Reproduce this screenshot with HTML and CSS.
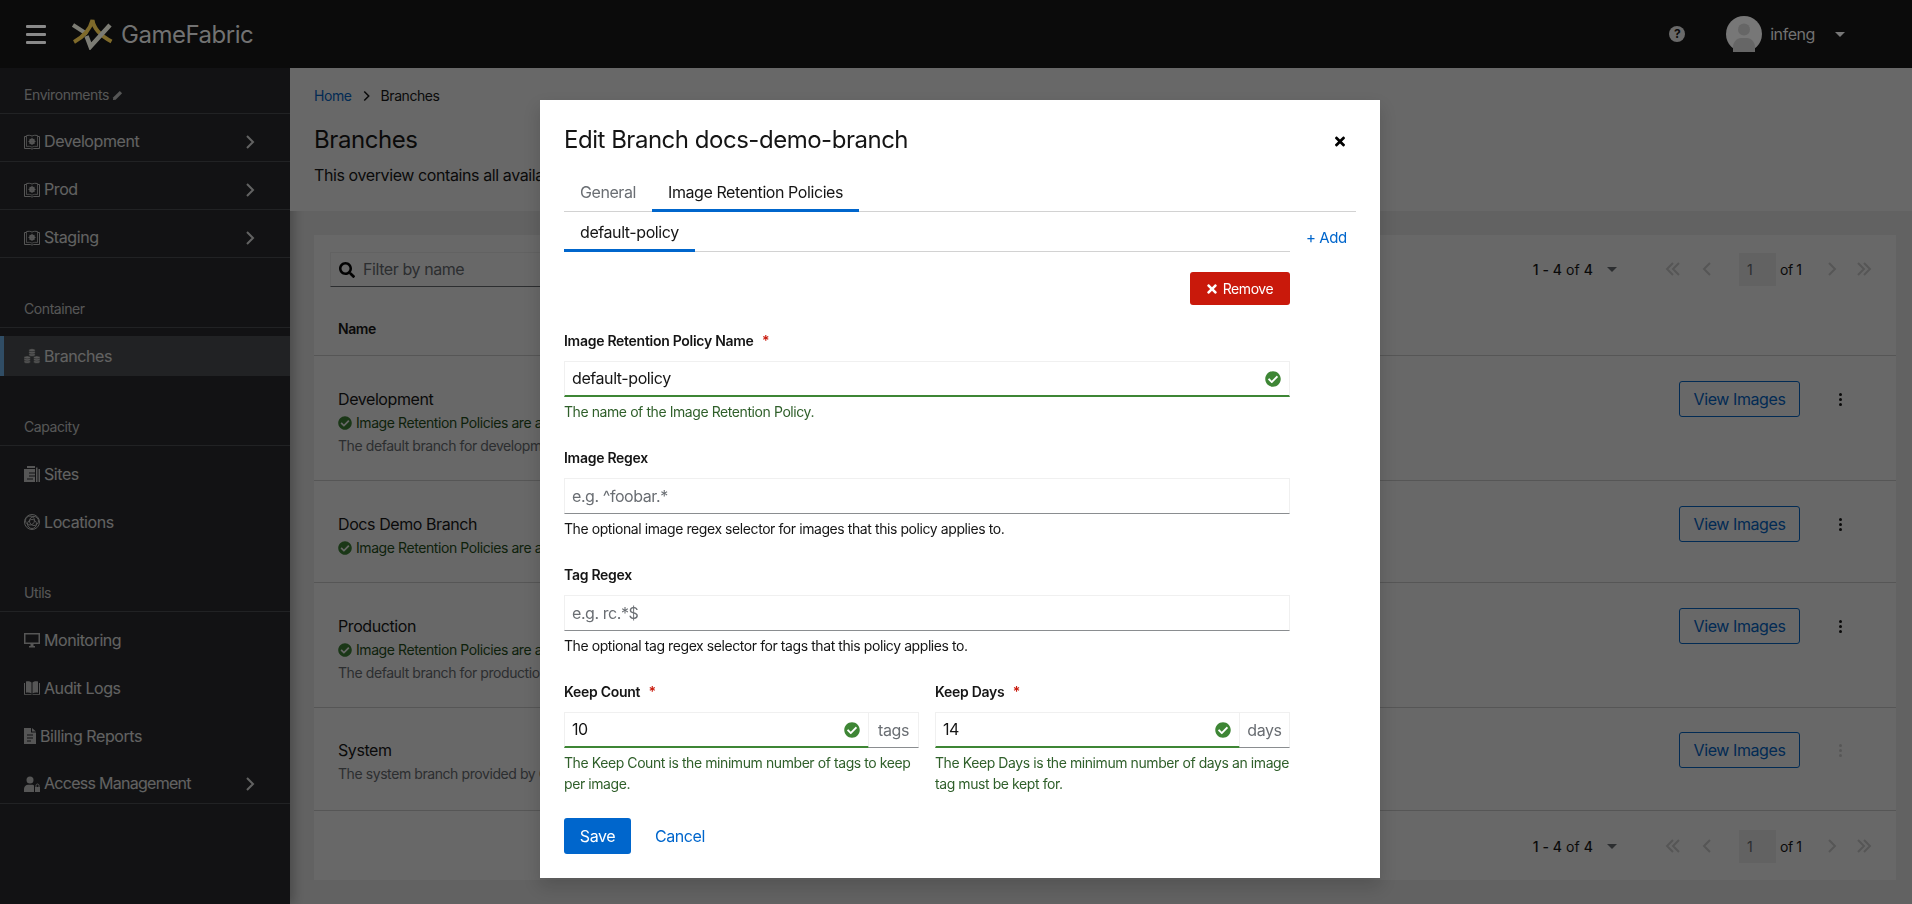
FILE: index.html
```html
<!DOCTYPE html>
<html lang="en">
<head>
    <meta charset="UTF-8">
    <title>GameFabric - Branches</title>
    <link rel="stylesheet" href="styles.css">
</head>
<body>
    <svg class="sprites" width="0" height="0">
        <symbol id="check" viewBox="0 0 512 512"><path d="M504 256c0 136.967-111.033 248-248 248S8 392.967 8 256 119.033 8 256 8s248 111.033 248 248zM227.314 387.314l184-184c6.248-6.248 6.248-16.379 0-22.627l-22.627-22.627c-6.248-6.249-16.379-6.249-22.628 0L216 308.118l-70.059-70.059c-6.248-6.248-16.379-6.248-22.628 0l-22.627 22.627c-6.248 6.248-6.248 16.379 0 22.627l104 104c6.249 6.249 16.379 6.249 22.628.001z"/></symbol>
        <symbol id="times" viewBox="0 0 352 512"><path d="M242.72 256l100.07-100.07c12.28-12.28 12.28-32.19 0-44.48l-22.24-22.24c-12.28-12.28-32.19-12.28-44.48 0L176 189.28 75.93 89.21c-12.28-12.28-32.19-12.28-44.48 0L9.21 111.45c-12.28 12.28-12.28 32.19 0 44.48L109.28 256 9.21 356.07c-12.28 12.28-12.28 32.19 0 44.48l22.24 22.24c12.28 12.28 32.2 12.28 44.48 0L176 322.72l100.07 100.07c12.28 12.28 32.2 12.28 44.48 0l22.24-22.24c12.28-12.28 12.28-32.19 0-44.48L242.72 256z"/></symbol>
        <symbol id="search" viewBox="0 0 512 512"><path d="M505 442.7L405.3 343c-4.5-4.5-10.6-7-17-7H372c27.6-35.3 44-79.7 44-128C416 93.1 322.9 0 208 0S0 93.1 0 208s93.1 208 208 208c48.3 0 92.7-16.4 128-44v16.3c0 6.4 2.5 12.5 7 17l99.7 99.7c9.4 9.4 24.6 9.4 33.9 0l28.3-28.3c9.4-9.4 9.4-24.6.1-34zM208 336c-70.7 0-128-57.2-128-128 0-70.7 57.2-128 128-128 70.7 0 128 57.2 128 128 0 70.7-57.2 128-128 128z"/></symbol>
        <symbol id="chev" viewBox="0 0 10 16"><path d="M2 2l6 6-6 6" fill="none" stroke="currentColor" stroke-width="2"/></symbol>
        <symbol id="chev-l" viewBox="0 0 10 16"><path d="M8 2L2 8l6 6" fill="none" stroke="currentColor" stroke-width="2"/></symbol>
        <symbol id="dbl-l" viewBox="0 0 16 16"><path d="M8 2L2 8l6 6M14 2L8 8l6 6" fill="none" stroke="currentColor" stroke-width="2"/></symbol>
        <symbol id="dbl-r" viewBox="0 0 16 16"><path d="M2 2l6 6-6 6M8 2l6 6-6 6" fill="none" stroke="currentColor" stroke-width="2"/></symbol>
        <symbol id="env" viewBox="0 0 16 16"><path d="M.5 2.500h2V1.600c2-.6 4.200-.3 5.500.5 1.300-.8 3.500-1.100 5.500-.5v.9h2V14.500H9.500c-.4.600-2.600.600-3 0H.5z" fill="none" stroke="currentColor" stroke-width="1"/><path d="M2.500 2.500V12.500c2-.4 4-.2 5.500.7 1.500-.9 3.500-1.100 5.500-.7V2.500" fill="none" stroke="currentColor" stroke-width=".8"/><circle cx="8" cy="7.400" r="2.800" fill="currentColor"/><circle cx="8" cy="7.400" r="1" fill="#282a2e"/><path d="M8 3.800v7.200M4.400 7.400h7.200M5.500 4.900l5 5M10.500 4.900l-5 5" stroke="currentColor" stroke-width=".9"/></symbol>
    </svg>

    <header class="topbar">
        <div class="burger"><span></span><span></span><span></span></div>
        <svg class="logo" viewBox="0 0 42 32" width="42" height="32">
            <path d="M2 7l14 9" fill="none" stroke="#7c7c74" stroke-width="4"/>
            <path d="M3 24C12 19 19 12 21.500 2 23 12 32 19 40.500 23.500" fill="none" stroke="#7f6a2a" stroke-width="4"/>
            <path d="M15.500 18L19.500 28.500 39 7" fill="none" stroke="#7c7c74" stroke-width="4.500"/>
        </svg>
        <span class="brand">GameFabric</span>
        <span class="help">?</span>
        <svg class="avatar" viewBox="0 0 36 36" width="36" height="36">
            <circle cx="18" cy="18" r="18" fill="#777"/>
            <circle cx="18" cy="13.500" r="6" fill="#666"/>
            <path d="M7 36v-5c0-5 4-9 8-9h6c4 0 8 4 8 9v5z" fill="#666"/>
        </svg>
        <span class="username">infeng</span>
        <span class="caret caret-light"></span>
    </header>

    <div class="layout">
        <nav class="sidebar">
            <div class="nav-label">Environments
                <svg width="11" height="11" viewBox="0 0 12 12"><path d="M8.500 1l2.500 2.500-7 7L1 11l.5-3z" fill="currentColor"/></svg>
            </div>
            <a class="nav-item bordered"><svg class="nav-icon"><use href="#env"/></svg>Development<svg class="nav-chev"><use href="#chev"/></svg></a>
            <a class="nav-item bordered"><svg class="nav-icon"><use href="#env"/></svg>Prod<svg class="nav-chev"><use href="#chev"/></svg></a>
            <a class="nav-item bordered"><svg class="nav-icon"><use href="#env"/></svg>Staging<svg class="nav-chev"><use href="#chev"/></svg></a>

            <div class="nav-label spaced">Container</div>
            <a class="nav-item active">
                <svg class="nav-icon" viewBox="0 0 16 16"><g fill="currentColor" stroke="#4f5255" stroke-width=".5"><ellipse cx="8" cy="6.800" rx="3.200" ry="1.500"/><ellipse cx="8" cy="4.500" rx="3.200" ry="1.500"/><ellipse cx="8" cy="2.200" rx="3.200" ry="1.500"/><ellipse cx="3.200" cy="13.800" rx="3.200" ry="1.500"/><ellipse cx="3.200" cy="11.600" rx="3.200" ry="1.500"/><ellipse cx="3.200" cy="9.400" rx="3.200" ry="1.500"/><ellipse cx="12.800" cy="13.800" rx="3.200" ry="1.500"/><ellipse cx="12.800" cy="11.600" rx="3.200" ry="1.500"/><ellipse cx="12.800" cy="9.400" rx="3.200" ry="1.500"/></g></svg>
                Branches
            </a>

            <div class="nav-label spaced">Capacity</div>
            <a class="nav-item">
                <svg class="nav-icon" viewBox="0 0 16 16"><path fill="currentColor" d="M0 3h11v13H0zM3 0h8v2H3zM12 1.500h1.500V16H12zM14.500 3H16v13h-1.500z"/><path stroke="#282a2e" stroke-width="1.200" d="M5 7h6M5 10h6M3 13h6"/></svg>
                Sites
            </a>
            <a class="nav-item">
                <svg class="nav-icon" viewBox="0 0 16 16"><g fill="none" stroke="currentColor" stroke-width="1"><circle cx="8" cy="8" r="7.500"/><circle cx="6" cy="6.500" r="4.500"/><circle cx="10" cy="7" r="4.500"/><circle cx="8" cy="10" r="4.500"/></g></svg>
                Locations
            </a>

            <div class="nav-label spaced">Utils</div>
            <a class="nav-item">
                <svg class="nav-icon" viewBox="0 0 16 16"><path fill="currentColor" d="M0 1h16v11H0zM5 14h6v1.500H5zM6.500 12h3v2h-3z"/><path fill="#282a2e" d="M1.500 2.500h13v8h-13z"/></svg>
                Monitoring
            </a>
            <a class="nav-item">
                <svg class="nav-icon" viewBox="0 0 16 16"><path fill="currentColor" d="M2 1.500c2.300-.4 4.300 0 5.500 1v11c-1.400-.8-3.200-1.100-5.500-.8zM14 1.500c-2.300-.4-4.300 0-5.500 1v11c1.400-.8 3.200-1.100 5.500-.8zM0 3h1v11h6.500v.8H0zM16 3h-1v11H8.500v.8H16z"/></svg>
                Audit Logs
            </a>
            <a class="nav-item">
                <svg class="nav-icon narrow" viewBox="0 0 12 16"><path fill="currentColor" d="M0 0h7v4.500h5V16H0zM8 0l4 3.500H8z"/><path stroke="#282a2e" stroke-width="1.200" d="M3 7h6M3 10h6M3 13h4"/></svg>
                Billing Reports
            </a>
            <a class="nav-item bordered">
                <svg class="nav-icon" viewBox="0 0 16 16"><g fill="currentColor"><circle cx="6" cy="4" r="3.500"/><path d="M0 16v-3c0-2.500 2-4.200 4-4.200h4c1 0 1.500.3 2 .6V16z"/><path d="M11 11h5v5h-5z"/></g><path d="M12 11V9.500c0-2 3-2 3 0V11" fill="none" stroke="currentColor"/></svg>
                <span class="nav-long">Access Management</span><svg class="nav-chev"><use href="#chev"/></svg>
            </a>
        </nav>

        <main class="content">
            <section class="page-head">
                <div class="breadcrumb">
                    <a class="link">Home</a>
                    <svg class="crumb-sep"><use href="#chev"/></svg>
                    <span>Branches</span>
                </div>
                <h1 class="page-title">Branches</h1>
                <p class="page-desc">This overview contains all available branches and their image retention policies.</p>
            </section>

            <section class="card">
                <div class="toolbar">
                    <div class="filter">
                        <svg class="search-icon"><use href="#search"/></svg>
                        <span class="placeholder">Filter by name</span>
                    </div>
                    <div class="pager">
                        <span class="pager-count"><b>1 - 4</b> of <b>4</b></span>
                        <span class="caret"></span>
                        <svg class="pager-icon first"><use href="#dbl-l"/></svg>
                        <svg class="pager-icon"><use href="#chev-l"/></svg>
                        <span class="pager-input">1</span>
                        <span class="pager-of">of 1</span>
                        <svg class="pager-icon"><use href="#chev"/></svg>
                        <svg class="pager-icon"><use href="#dbl-r"/></svg>
                    </div>
                </div>
                <div class="table-head">Name</div>

                <div class="row">
                    <div class="row-text">
                        <div class="row-name">Development</div>
                        <div class="row-status"><svg class="status-icon"><use href="#check"/></svg>Image Retention Policies are active</div>
                        <div class="row-desc">The default branch for development.</div>
                    </div>
                    <a class="btn-outline">View Images</a>
                    <span class="kebab"><i></i><i></i><i></i></span>
                </div>
                <div class="row">
                    <div class="row-text">
                        <div class="row-name">Docs Demo Branch</div>
                        <div class="row-status"><svg class="status-icon"><use href="#check"/></svg>Image Retention Policies are active</div>
                    </div>
                    <a class="btn-outline">View Images</a>
                    <span class="kebab"><i></i><i></i><i></i></span>
                </div>
                <div class="row">
                    <div class="row-text">
                        <div class="row-name">Production</div>
                        <div class="row-status"><svg class="status-icon"><use href="#check"/></svg>Image Retention Policies are active</div>
                        <div class="row-desc">The default branch for production.</div>
                    </div>
                    <a class="btn-outline">View Images</a>
                    <span class="kebab"><i></i><i></i><i></i></span>
                </div>
                <div class="row row-last">
                    <div class="row-text">
                        <div class="row-name">System</div>
                        <div class="row-desc">The system branch provided by GameFabric.</div>
                    </div>
                    <a class="btn-outline">View Images</a>
                    <span class="kebab disabled"><i></i><i></i><i></i></span>
                </div>

                <div class="pager pager-bottom">
                    <span class="pager-count"><b>1 - 4</b> of <b>4</b></span>
                    <span class="caret"></span>
                    <svg class="pager-icon first"><use href="#dbl-l"/></svg>
                    <svg class="pager-icon"><use href="#chev-l"/></svg>
                    <span class="pager-input">1</span>
                    <span class="pager-of">of 1</span>
                    <svg class="pager-icon"><use href="#chev"/></svg>
                    <svg class="pager-icon"><use href="#dbl-r"/></svg>
                </div>
            </section>
        </main>
    </div>

    <div class="backdrop"></div>

    <div class="modal">
        <div class="modal-head">
            <h2 class="modal-title">Edit Branch docs-demo-branch</h2>
            <svg class="modal-close"><use href="#times"/></svg>
        </div>
        <div class="tabs">
            <span class="tab">General</span>
            <span class="tab tab-active">Image Retention Policies</span>
        </div>
        <div class="subtabs-row">
            <div class="tabs subtabs">
                <span class="tab tab-active">default-policy</span>
            </div>
            <a class="add-link">+ Add</a>
        </div>

        <div class="form">
            <div class="remove-row">
                <a class="btn-danger"><svg class="btn-icon"><use href="#times"/></svg>Remove</a>
            </div>

            <div class="field">
                <div class="field-label">Image Retention Policy Name <em>*</em></div>
                <div class="input valid">default-policy<svg class="valid-icon"><use href="#check"/></svg></div>
                <div class="field-help ok">The name of the Image Retention Policy.</div>
            </div>
            <div class="field">
                <div class="field-label">Image Regex</div>
                <div class="input"><span class="placeholder">e.g. ^foobar.*</span></div>
                <div class="field-help">The optional image regex selector for images that this policy applies to.</div>
            </div>
            <div class="field">
                <div class="field-label">Tag Regex</div>
                <div class="input"><span class="placeholder">e.g. rc.*$</span></div>
                <div class="field-help">The optional tag regex selector for tags that this policy applies to.</div>
            </div>
            <div class="field-pair">
                <div class="field">
                    <div class="field-label">Keep Count <em>*</em></div>
                    <div class="input-group">
                        <div class="input valid">10<svg class="valid-icon"><use href="#check"/></svg></div>
                        <span class="addon">tags</span>
                    </div>
                    <div class="field-help ok">The Keep Count is the minimum number of tags to keep per image.</div>
                </div>
                <div class="field">
                    <div class="field-label">Keep Days <em>*</em></div>
                    <div class="input-group">
                        <div class="input valid">14<svg class="valid-icon"><use href="#check"/></svg></div>
                        <span class="addon">days</span>
                    </div>
                    <div class="field-help ok">The Keep Days is the minimum number of days an image tag must be kept for.</div>
                </div>
            </div>
            <div class="actions">
                <a class="btn-primary">Save</a>
                <a class="link">Cancel</a>
            </div>
        </div>
    </div>
</body>
</html>
```

FILE: styles.css
```css
* {
    box-sizing: border-box;
}
html, body {
    margin: 0;
    height: 904px;
    overflow: hidden;
}
body {
    font-family: Inter, "Noto Sans", sans-serif;
    font-size: 14px;
    line-height: 21px;
    letter-spacing: -0.03em;
    color: #151515;
    background: #f0f0f0;
}
.sprites {
    position: absolute;
}
.link {
    color: #06c;
}

/* top bar sits above the backdrop, so its colours are the dimmed ones */
.topbar {
    position: relative;
    z-index: 2;
    height: 68px;
    background: #0b0b0b;
    color: #727272;
    display: flex;
    align-items: center;
    padding-left: 26px;
}
.burger {
    width: 20px;
    display: flex;
    flex-direction: column;
    gap: 5px;
}
.burger span {
    height: 3px;
    background: #8a8a8a;
    border-radius: 1px;
}
.logo {
    margin-left: 25px;
}
.brand {
    margin-left: 8px;
    font-size: 24px;
    letter-spacing: -0.02em;
}
.help {
    margin-left: auto;
    margin-right: 1px;
    width: 16px;
    height: 16px;
    border-radius: 50%;
    background: #6a6a6a;
    color: #0b0b0b;
    font-size: 12px;
    font-weight: 700;
    line-height: 16px;
    text-align: center;
}
.avatar {
    margin-left: 40px;
}
.username {
    margin-left: 8px;
    font-size: 16px;
}
.caret {
    display: inline-block;
    width: 0;
    height: 0;
    border-left: 5px solid transparent;
    border-right: 5px solid transparent;
    border-top: 5px solid #6a6e73;
}
.caret-light {
    border-top-color: #777;
    margin: 0 67px 0 20px;
}

/* sidebar */
.layout {
    display: flex;
    height: 836px;
}
.sidebar {
    width: 290px;
    flex: none;
    background: #282a2e;
    color: #f0f0f0;
    box-shadow: 4px 0 10px rgba(0, 0, 0, 0.25);
}
.nav-label {
    padding: 16px 24px 8px;
    border-bottom: 1px solid #4f5255;
    color: #d2d2d2;
    height: 46px;
}
.nav-label svg {
    vertical-align: -1px;
}
.nav-label.spaced {
    margin-top: 24px;
}
.nav-item {
    display: flex;
    align-items: center;
    gap: 4px;
    height: 40px;
    margin-top: 8px;
    padding: 0 35px 0 24px;
    font-size: 16px;
}
.nav-item.bordered {
    border-bottom: 1px solid #4f5255;
}
.nav-item.active {
    background: #4f5255;
    border-left: 4px solid #73bcf7;
    padding-left: 20px;
}
.nav-icon {
    width: 16px;
    height: 16px;
    color: #d2d2d2;
    flex: none;
}
.nav-icon.narrow {
    width: 12px;
}
.nav-long {
    letter-spacing: -0.045em;
}
.nav-chev {
    width: 10px;
    height: 16px;
    margin-left: auto;
}

/* page */
.content {
    flex: 1;
    min-width: 0;
}
.page-head {
    height: 143px;
    background: #fff;
    padding: 17px 24px 24px;
}
.breadcrumb {
    display: flex;
    align-items: center;
    gap: 10px;
    margin-bottom: 18px;
}
.crumb-sep {
    width: 9px;
    height: 12px;
}
.page-title {
    margin: 0;
    font-size: 24px;
    line-height: 32px;
    font-weight: 400;
}
.page-desc {
    margin: 7px 0 0;
    font-size: 16px;
    line-height: 24px;
    letter-spacing: -0.025em;
}
.card {
    background: #fff;
    margin: 24px 16px 0 24px;
    height: 645px;
}
.toolbar {
    height: 67px;
    padding: 17px 0 0 16px;
    display: flex;
    justify-content: space-between;
}
.filter {
    width: 400px;
    height: 35px;
    display: flex;
    align-items: center;
    gap: 8px;
    padding-left: 8px;
    border: 1px solid #f0f0f0;
    border-bottom-color: #6a6e73;
}
.search-icon {
    width: 16px;
    height: 16px;
}
.placeholder {
    color: #6a6e73;
    font-size: 16px;
}
.pager {
    display: flex;
    align-items: center;
    height: 34px;
    padding-right: 24px;
}
.pager-bottom {
    justify-content: flex-end;
    margin-top: 18px;
}
.pager-count b {
    font-weight: 500;
}
.pager-count {
    margin-right: 14px;
    letter-spacing: 0.005em;
}
.pager-count + .caret {
    margin-right: 48px;
}
.pager-icon {
    width: 16px;
    height: 16px;
    color: #d2d2d2;
    margin-right: 16px;
}
.pager-icon.first {
    margin-right: 18px;
}
.pager-icon:last-child {
    margin-right: 0;
}
.pager-input {
    width: 37px;
    height: 33px;
    line-height: 33px;
    background: #f0f0f0;
    color: #6a6e73;
    padding-left: 8px;
    margin-left: 8px;
}
.pager-of {
    width: 48px;
    padding-left: 4px;
}
.table-head {
    height: 54px;
    padding: 16px 24px 0;
    font-weight: 600;
    border-bottom: 1px solid #d2d2d2;
}
.row {
    display: flex;
    align-items: flex-start;
    padding: 25px 16px 23px 24px;
    border-bottom: 1px solid #d2d2d2;
}
.row-last {
    margin-top: -1px;
    padding-bottom: 25px;
}
.row-text {
    flex: 1;
    min-width: 0;
    padding-top: 6px;
}
.row-name {
    font-size: 16px;
    line-height: 24px;
}
.row-status {
    line-height: 23px;
    color: #1e4f18;
    display: flex;
    align-items: center;
    gap: 4px;
}
.status-icon {
    width: 14px;
    height: 14px;
    fill: #3e8635;
}
.row-desc {
    line-height: 23px;
    color: #6a6e73;
}
.btn-outline {
    width: 121px;
    height: 36px;
    line-height: 34px;
    text-align: center;
    border: 1px solid #06c;
    border-radius: 3px;
    color: #06c;
    font-size: 16px;
}
.kebab {
    width: 80px;
    height: 36px;
    display: flex;
    flex-direction: column;
    align-items: center;
    justify-content: center;
    gap: 2px;
}
.kebab i {
    width: 3px;
    height: 3px;
    border-radius: 50%;
    background: #151515;
}
.kebab.disabled i {
    background: #d2d2d2;
}

/* modal */
.backdrop {
    position: fixed;
    inset: 0;
    z-index: 1;
    background: rgba(3, 3, 3, 0.6);
}
.modal {
    position: fixed;
    z-index: 2;
    left: 540px;
    top: 100px;
    width: 840px;
    height: 778px;
    background: #fff;
    padding: 24px;
    box-shadow: 0 8px 16px rgba(3, 3, 3, 0.16);
}
.modal-head {
    display: flex;
    justify-content: space-between;
    align-items: center;
    height: 32px;
    margin-bottom: 20px;
}
.modal-title {
    margin: 0;
    font-size: 24px;
    line-height: 32px;
    font-weight: 400;
    letter-spacing: -0.02em;
}
.modal-close {
    width: 10px;
    height: 15px;
    margin: 2px 11px 0 0;
}
.tabs {
    display: flex;
    height: 36px;
    border-bottom: 1px solid #d2d2d2;
    font-size: 16px;
}
.tab {
    padding: 4px 16px 0;
    height: 36px;
    line-height: 24px;
    color: #6a6e73;
}
.tab-active {
    color: #151515;
    border-bottom: 3px solid #06c;
}
.subtabs-row {
    display: flex;
    align-items: flex-end;
}
.subtabs {
    flex: none;
    width: 726px;
    margin-top: 8px;
    height: 32px;
    font-size: 16px;
}
.subtabs .tab {
    height: 32px;
    padding-top: 0;
}
.add-link {
    margin-left: 16px;
    font-size: 15px;
    color: #06c;
    padding-bottom: 4px;
}
.form {
    width: 726px;
}
.remove-row {
    display: flex;
    justify-content: flex-end;
    margin-top: 20px;
}
.btn-danger {
    width: 100px;
    height: 33px;
    display: flex;
    align-items: center;
    justify-content: center;
    gap: 6px;
    background: #c9190b;
    color: #fff;
    border-radius: 3px;
}
.btn-icon {
    width: 10px;
    height: 14px;
    fill: #fff;
}
.field {
    margin-top: 24px;
}
.field-label {
    line-height: 24px;
    margin-bottom: 8px;
    font-weight: 600;
    letter-spacing: -0.02em;
}
.field-label em {
    color: #c9190b;
    font-style: normal;
    margin-left: 5px;
}
.input {
    height: 36px;
    display: flex;
    align-items: center;
    justify-content: space-between;
    padding: 0 8px 0 7px;
    border: 1px solid #f0f0f0;
    border-bottom-color: #8a8d90;
    font-size: 16px;
}
.input.valid {
    border-bottom: 2px solid #3e8635;
}
.valid-icon {
    width: 16px;
    height: 16px;
    fill: #3e8635;
}
.field-help {
    margin-top: 4px;
}
.field-help.ok {
    color: #2f5f2a;
}
.field-pair {
    display: grid;
    grid-template-columns: 1fr 1fr;
    column-gap: 16px;
}
.input-group {
    display: flex;
}
.input-group .input {
    flex: 1;
}
.addon {
    width: 50px;
    height: 36px;
    line-height: 34px;
    text-align: center;
    font-size: 16px;
    color: #6a6e73;
    border: 1px solid #f0f0f0;
    border-left-width: 0;
    border-bottom-color: #8a8d90;
}
.actions {
    display: flex;
    align-items: center;
    gap: 24px;
    margin-top: 24px;
    font-size: 16px;
}
.btn-primary {
    width: 67px;
    height: 36px;
    line-height: 36px;
    text-align: center;
    background: #06c;
    color: #fff;
    border-radius: 3px;
}
```
